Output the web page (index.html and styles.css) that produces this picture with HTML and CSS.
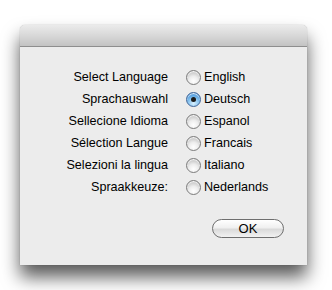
FILE: index.html
```html
<!DOCTYPE html>
<html lang="de">
<head>
  <meta charset="UTF-8" />
  <title>Language</title>
  <link rel="stylesheet" href="styles.css">
</head>
<body>
  <div class="window">
    <div class="titlebar"></div>
    <div class="content">
      <div class="lang-grid">
        <span class="label">Select Language</span>
        <label class="option"><span class="radio"></span>English</label>

        <span class="label">Sprachauswahl</span>
        <label class="option"><span class="radio checked"></span>Deutsch</label>

        <span class="label">Sellecione Idioma</span>
        <label class="option"><span class="radio"></span>Espanol</label>

        <span class="label">Sélection Langue</span>
        <label class="option"><span class="radio"></span>Francais</label>

        <span class="label">Selezioni la lingua</span>
        <label class="option"><span class="radio"></span>Italiano</label>

        <span class="label">Spraakkeuze:</span>
        <label class="option"><span class="radio"></span>Nederlands</label>
      </div>

      <div class="actions">
        <button class="ok-btn">OK</button>
      </div>
    </div>
  </div>
</body>
</html>
```

FILE: styles.css
```css
* {
  box-sizing: border-box;
  font-family: 'Liberation Sans', Arial, sans-serif;
}

body {
  margin: 0;
  background: #fff;
  width: 332px;
  height: 290px;
  overflow: hidden;
}

.window {
  margin: 25px 0 0 20px;
  width: 287px;
  height: 240px;
  background: #ececec;
  border-radius: 5px 5px 0 0;
  box-shadow: 0 12px 18px rgba(0,0,0,0.65), 0 0 1px rgba(0,0,0,0.4);
  display: flex;
  flex-direction: column;
}

.titlebar {
  height: 22px;
  border-radius: 5px 5px 0 0;
  background: linear-gradient(#ebebeb, #d8d8d8 50%, #c3c3c3);
  border-bottom: 1px solid #8e8e8e;
}

.content {
  flex: 1;
  padding: 19px 23px 0 0;
  display: flex;
  flex-direction: column;
}

.lang-grid {
  display: grid;
  grid-template-columns: 148px auto;
  column-gap: 18px;
  grid-auto-rows: 22px;
  align-items: center;
  font-size: 12.6px;
  color: #000;
}

.label {
  text-align: right;
}

.option {
  display: flex;
  align-items: center;
  gap: 3px;
}

.radio {
  width: 15px;
  height: 15px;
  border-radius: 50%;
  border: 1px solid #7c7c7c;
  background: radial-gradient(circle at 50% 78%, #ffffff 0%, #ededed 40%, #c8c8c8 75%, #bababa 100%);
  box-shadow: inset 0 1px 1px rgba(255,255,255,0.9);
  display: flex;
  align-items: center;
  justify-content: center;
}

.radio.checked {
  border-color: #3f6598;
  background: radial-gradient(circle at 50% 80%, #d8f0ff 0%, #8cc6f0 40%, #4a98dc 75%, #3a78c0 100%);
}

.radio.checked::after {
  content: "";
  width: 5px;
  height: 5px;
  border-radius: 50%;
  background: #1a1a1a;
}

.actions {
  display: flex;
  justify-content: flex-end;
  margin-top: 21px;
}

.ok-btn {
  width: 72px;
  height: 19px;
  border-radius: 10px;
  border: 1px solid #6e6e6e;
  background: linear-gradient(#ffffff, #f0f0f0 45%, #dadada 55%, #f2f2f2);
  font-size: 13px;
  padding: 0;
  color: #000;
}
```
